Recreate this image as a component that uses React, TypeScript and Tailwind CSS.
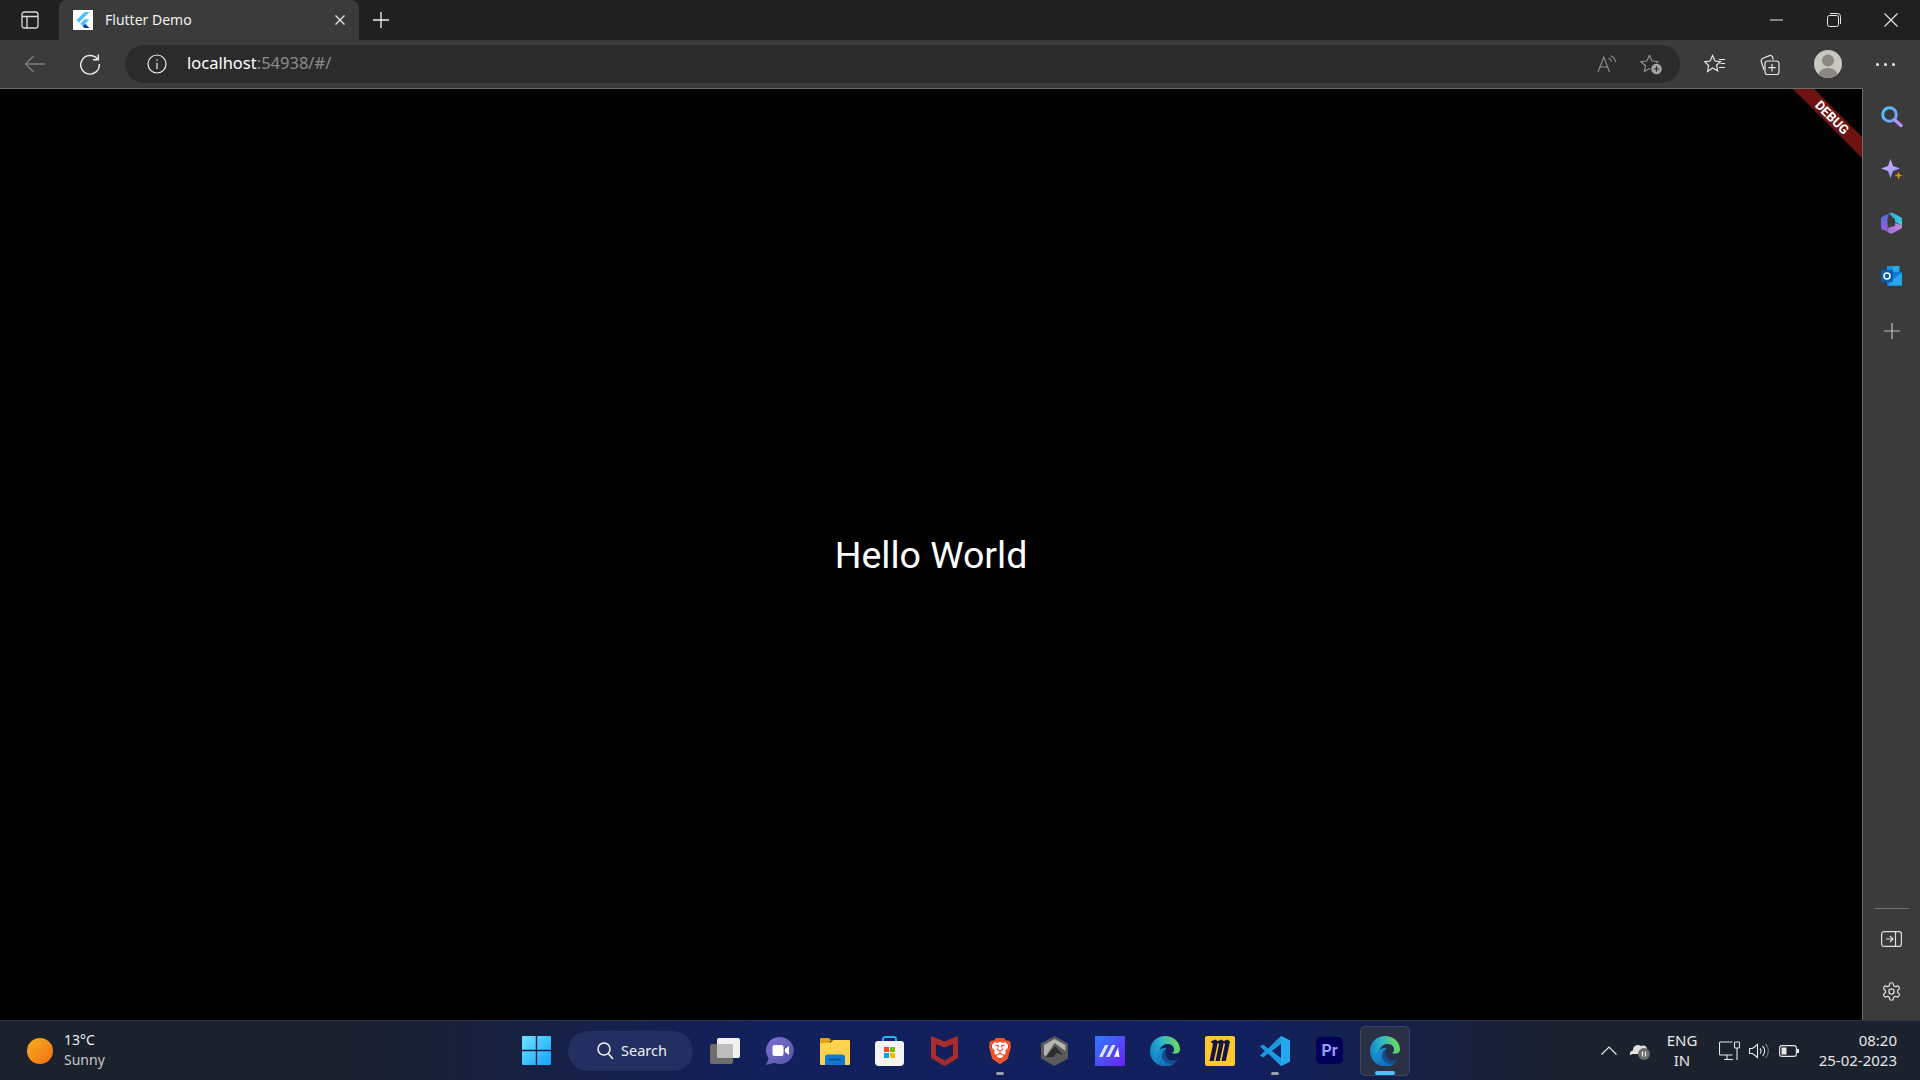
import React from 'react'
import { SiBrave } from 'react-icons/si'

function EdgeIcon({ id }: { id: string }) {
  return (
    <svg width="30" height="30" viewBox="0 0 30 30">
      <defs>
        <linearGradient id={`${id}-top`} x1="0" y1="0.7" x2="1" y2="0.4">
          <stop offset="0" stopColor="#0c7fc7" />
          <stop offset="0.5" stopColor="#2fb5c9" />
          <stop offset="1" stopColor="#6fdc5a" />
        </linearGradient>
        <linearGradient id={`${id}-low`} x1="0" y1="0" x2="1" y2="1">
          <stop offset="0" stopColor="#1a9be0" />
          <stop offset="1" stopColor="#0f5fa8" />
        </linearGradient>
      </defs>
      <path d="M15 0C6.500 0 0 6.500 0 15c0 8.500 6.500 15 15 15 3.600 0 6.600-.9 9-2.600-4.500 1.200-9.200-.4-11-3.600-2.400-4.200-.6-9.600 3.400-11.400-2-.6-5.500.2-7.500 2.600C11 9.500 15 7.800 18 8c4 .2 6.500 3 6 6.500-.2 1.200-1 2-2 2.500 3 1.500 8 .5 8-3.500C30 6 23.500 0 15 0z" fill={`url(#${id}-top)`} />
      <path d="M8 15.500C5 18 3.800 22 5 26c2.600 2.500 6 4 10 4 3.600 0 6.600-.9 9-2.600-4.500 1.200-9.200-.4-11-3.600-2.400-4.200-.6-9.600 3.400-11.400-2.900-.8-6.100.2-8.400 3.200z" fill={`url(#${id}-low)`} />
      <path d="M16.500 12.800c-3.500 1.200-5.300 6-3.500 10.400 1.500 3.500 6.500 5.500 11 4.200 1.700-1 3-2.300 4-3.900-3 1.500-7.500 1.500-10-.5-2.500-2.200-3.500-6.500-1.500-10.200z" fill="#0f4f94" />
    </svg>
  )
}

function TaskSlot({ children, dot }: { children: React.ReactNode; dot?: boolean }) {
  return (
    <div className="relative flex h-[60px] w-[55px] shrink-0 items-center justify-center">
      {children}
      {dot && <span className="absolute bottom-[6px] left-1/2 h-[3px] w-[8px] -translate-x-1/2 rounded-full bg-[#9a9fae]" />}
    </div>
  )
}

function SideSlot({ children }: { children: React.ReactNode }) {
  return <div className="flex h-[53px] items-center justify-center">{children}</div>
}

export default function App() {
  return (
    <div className="flex h-screen w-[1920px] flex-col overflow-hidden bg-black font-['Noto_Sans',sans-serif] text-white">
      {/* Title bar */}
      <div className="flex h-10 shrink-0 bg-[#202020]">
        <div className="flex w-[59px] items-center justify-center">
          <svg width="18" height="18" viewBox="0 0 18 18" fill="none" stroke="#d8d8d8" strokeWidth="1.300">
            <rect x="1" y="1" width="16" height="16" rx="2.500" />
            <path d="M1 5.500h16M6 5.500V17" />
          </svg>
        </div>
        <div className="flex h-10 w-[300px] items-center rounded-t-lg bg-[#3b3b3b] pl-[14px]">
          <div className="flex h-5 w-5 items-center justify-center bg-white">
            <svg width="16" height="16" viewBox="0 0 24 24">
              <path d="M14.300 0 2.300 12 6 15.700 21.700 0z" fill="#47c5fb" />
              <path d="M14.300 11 7.900 17.500l3.700 3.700L21.700 11z" fill="#47c5fb" />
              <path d="M11.600 21.200 14.300 24h7.400l-6.500-6.500-3.600 3.700z" fill="#0a3f8f" />
            </svg>
          </div>
          <span className="ml-3 text-[14px] leading-none text-[#f2f2f2]">Flutter Demo</span>
          <svg className="ml-auto mr-[13px]" width="12" height="12" viewBox="0 0 12 12" stroke="#e8e8e8" strokeWidth="1.300">
            <path d="M1.500 1.500l9 9M10.500 1.500l-9 9" />
          </svg>
        </div>
        <div className="flex w-[44px] items-center justify-center">
          <svg width="18" height="18" viewBox="0 0 18 18" stroke="#f0f0f0" strokeWidth="1.300">
            <path d="M9 1v16M1 9h16" />
          </svg>
        </div>
        <div className="ml-auto flex">
          <div className="flex w-[57px] items-center justify-center">
            <svg width="13" height="2" viewBox="0 0 13 2" stroke="#e8e8e8"><path d="M0 1h13" /></svg>
          </div>
          <div className="flex w-[57px] items-center justify-center">
            <svg width="14" height="14" viewBox="0 0 14 14" fill="none" stroke="#e8e8e8">
              <rect x="0.500" y="2.500" width="11" height="11" rx="2" />
              <path d="M3 .5h7.500a3 3 0 0 1 3 3V11" />
            </svg>
          </div>
          <div className="flex w-[58px] items-center justify-center">
            <svg width="14" height="14" viewBox="0 0 14 14" stroke="#e8e8e8" strokeWidth="1.100">
              <path d="M.5.5l13 13M13.500.5l-13 13" />
            </svg>
          </div>
        </div>
      </div>

      {/* Toolbar */}
      <div className="flex h-12 shrink-0 items-center bg-[#3b3b3b] pl-[7px]">
        <div className="flex w-[55px] justify-center">
          <svg width="22" height="20" viewBox="0 0 22 20" fill="none" stroke="#7d7d7d" strokeWidth="1.300">
            <path d="M21 10H1.500M9.500 2 1.500 10l8 8" />
          </svg>
        </div>
        <div className="flex w-[55px] justify-center">
          <svg width="22" height="22" viewBox="0 0 22 22" fill="none" stroke="#eeeeee" strokeWidth="1.400">
            <path d="M18.300 6A9.300 9.300 0 1 0 20.300 11" />
            <path d="M19.300 1.500V6.700H14" />
          </svg>
        </div>
        <div className="ml-2 flex h-[38px] w-[1555px] items-center rounded-full bg-[#2b2b2b] pr-[17px]">
          <svg className="ml-[22px]" width="20" height="20" viewBox="0 0 20 20" fill="none" stroke="#eeeeee" strokeWidth="1.200">
            <circle cx="10" cy="10" r="9" />
            <path d="M10 8.800V15M10 5.200v1.600" />
          </svg>
          <span className="mb-px ml-5 text-[16.500px] leading-none text-white">
            localhost<span className="text-[#8b8b8b]">:54938/#/</span>
          </span>
          <div className="ml-auto flex items-center gap-[23px]">
            <svg width="20" height="18" viewBox="0 0 20 18" fill="none" stroke="#8f8f8f" strokeWidth="1.100">
              <path d="M1 17 6.800 2 12.500 17M3 12h7.500" />
              <path d="M11.500 3a5 5 0 0 1 3 3.500M13.500 .7a7.500 7.500 0 0 1 5 6.500" />
            </svg>
            <svg width="23" height="21" viewBox="0 0 23 21" fill="none">
              <path d="M9.500 1.300 12 7l6 .7-4.500 4.100 1.200 5.800-5.200-3-5.200 3 1.200-5.800L.8 7.700 6.800 7z" stroke="#8f8f8f" strokeWidth="1.200" strokeLinejoin="round" />
              <circle cx="16.500" cy="15" r="5.800" fill="#a3a3a3" stroke="#2b2b2b" strokeWidth="1" />
              <path d="M16.500 12.300v5.400M13.800 15h5.400" stroke="#2b2b2b" strokeWidth="1.200" />
            </svg>
          </div>
        </div>
        <div className="ml-[14px] flex w-[42px] justify-center">
          <svg width="22" height="20" viewBox="0 0 22 20" fill="none" stroke="#e8e8e8" strokeWidth="1.200">
            <path d="M8.500 1.500 11 7l5.500.6-4 3.700 1.200 5.500-5.200-2.900-4.900 3.600 1-6-4-3.700 5.500-.8z" />
            <path d="M15 5.500h6M16.500 9.500H21M15 13.500h6" />
          </svg>
        </div>
        <div className="ml-3 flex w-[42px] justify-center">
          <svg width="21" height="21" viewBox="0 0 21 21" fill="none" stroke="#e8e8e8" strokeWidth="1.200">
            <path d="M5 16 2.300 7.500a2.500 2.500 0 0 1 1.700-3.200L10.500 1.600a2.500 2.500 0 0 1 3 1.400l.8 2.500" />
            <rect x="6" y="7" width="14" height="13.500" rx="2.500" />
            <path d="M13 10v7.500M9.300 13.700h7.500" />
          </svg>
        </div>
        <div className="ml-6 flex h-7 w-7 items-end justify-center overflow-hidden rounded-full bg-[#c9c7c2]">
          <svg width="28" height="28" viewBox="0 0 28 28">
            <circle cx="14" cy="10.500" r="6" fill="#8a8782" />
            <ellipse cx="14" cy="25" rx="9.500" ry="7" fill="#8a8782" />
          </svg>
        </div>
        <div className="ml-[34px] flex gap-[5px]">
          <span className="h-[3px] w-[3px] rounded-full bg-[#eeeeee]" />
          <span className="h-[3px] w-[3px] rounded-full bg-[#eeeeee]" />
          <span className="h-[3px] w-[3px] rounded-full bg-[#eeeeee]" />
        </div>
      </div>

      {/* Page + sidebar */}
      <div className="flex min-h-0 flex-1">
        <main className="relative flex flex-1 items-center justify-center border-t border-[#6b6b6b] bg-black">
          <h1 className="pt-[2px] font-['Roboto',sans-serif] text-[37.500px] font-normal leading-none text-white">Hello World</h1>
          <div className="absolute right-0 top-0 h-[70px] w-[70px] overflow-hidden">
            <div className="absolute left-[-20px] top-[21px] flex h-[15px] w-[120px] rotate-45 items-center justify-center bg-[#6f1212]">
              <span className="font-['Roboto',sans-serif] text-[13px] font-bold leading-none text-white">DEBUG</span>
            </div>
          </div>
        </main>
        <aside className="flex w-[58px] shrink-0 flex-col border-l border-[#6b6b6b] bg-[#3b3b3b] pt-[2px] pb-[2px]">
          <SideSlot>
            <svg width="22" height="22" viewBox="0 0 22 22" fill="none">
              <defs>
                <linearGradient id="s1" x1="0" y1="0" x2="1" y2="1">
                  <stop offset="0" stopColor="#4fc3f7" />
                  <stop offset="1" stopColor="#7a9cff" />
                </linearGradient>
              </defs>
              <circle cx="8.500" cy="8.500" r="6.800" stroke="url(#s1)" strokeWidth="3" />
              <path d="M14.500 14.500 20 19.500" stroke="#b490f0" strokeWidth="3.500" strokeLinecap="round" />
            </svg>
          </SideSlot>
          <SideSlot>
            <svg width="22" height="22" viewBox="0 0 22 22">
              <defs>
                <linearGradient id="s2" x1="0" y1="0" x2="1" y2="1">
                  <stop offset="0" stopColor="#d8a8ff" />
                  <stop offset="1" stopColor="#8f9cff" />
                </linearGradient>
              </defs>
              <path d="M9.500 0 12 7l7 2.500-7 2.500-2.500 7L7 12 0 9.500 7 7z" fill="url(#s2)" />
              <path d="M17.500 12.500l1 3 3 1-3 1-1 3.500-1-3.500-3-1 3-1z" fill="#d9920c" />
            </svg>
          </SideSlot>
          <SideSlot>
            <svg width="21" height="22" viewBox="0 0 21 22">
              <defs>
                <linearGradient id="s3" x1="0" y1="0" x2="0" y2="1">
                  <stop offset="0" stopColor="#4a6ee0" />
                  <stop offset="1" stopColor="#a05cd8" />
                </linearGradient>
                <linearGradient id="s4" x1="0" y1="0" x2="1" y2="1">
                  <stop offset="0" stopColor="#2aa8e0" />
                  <stop offset="1" stopColor="#3fd0d8" />
                </linearGradient>
                <linearGradient id="s5" x1="0" y1="0" x2="1" y2="0">
                  <stop offset="0" stopColor="#9a6be0" />
                  <stop offset="1" stopColor="#c88ae0" />
                </linearGradient>
              </defs>
              <path d="M8 1.500 1.500 4.500C.5 5 0 6 0 7v8c0 1 .5 2 1.500 2.500L7 20l-.5-3.500V7.500z" fill="url(#s3)" />
              <path d="M8 1.500C9 .5 11 .5 12 1l7.500 4c1 .5 1.500 1.500 1.500 2.500v6l-7-3.800V7.500z" fill="url(#s4)" />
              <path d="M6.500 12.500 14 10.700 21 13.500v1c0 1-.5 2-1.500 2.500L12 21c-2 1-4 .5-5-1z" fill="url(#s5)" />
              <path d="M7 7.500 14 10.500v3.300l-7 2z" fill="#3b3b3b" />
            </svg>
          </SideSlot>
          <SideSlot>
            <svg width="21" height="20" viewBox="0 0 21 20">
              <rect x="6" y="0" width="12" height="9" fill="#1490df" />
              <rect x="12" y="0" width="6.500" height="9" fill="#28a8ea" />
              <path d="M6 6h15v12.500a1.200 1.200 0 0 1-1.200 1.200H7.200A1.200 1.200 0 0 1 6 18.500z" fill="#0f78d4" />
              <path d="M12 13l9-6v12.500H7z" fill="#28a8ea" />
              <rect x="0" y="4" width="12" height="12" rx="1" fill="#0a5eb0" />
              <circle cx="6" cy="10" r="3" fill="none" stroke="#ffffff" strokeWidth="1.500" />
            </svg>
          </SideSlot>
          <div className="mt-[2px]">
            <SideSlot>
              <svg width="16" height="16" viewBox="0 0 16 16" stroke="#bdbdbd" strokeWidth="1.200">
                <path d="M8 0v16M0 8h16" />
              </svg>
            </SideSlot>
          </div>
          <div className="mx-auto mb-[3px] mt-auto h-px w-[35px] bg-[#6f6f6f]" />
          <SideSlot>
            <svg width="21" height="16" viewBox="0 0 21 16" fill="none" stroke="#e0e0e0" strokeWidth="1.200">
              <rect x="0.600" y="0.600" width="19.800" height="14.800" rx="2.500" />
              <path d="M14.500.6v14.800M5 8h6.500M9 5l3 3-3 3" />
            </svg>
          </SideSlot>
          <SideSlot>
            <svg width="21" height="21" viewBox="0 0 24 24" fill="none" stroke="#e0e0e0" strokeWidth="1.400" strokeLinejoin="round">
              <path d="M12.220 2h-.44a2 2 0 0 0-2 2v.18a2 2 0 0 1-1 1.730l-.43.250a2 2 0 0 1-2 0l-.15-.08a2 2 0 0 0-2.730.730l-.22.380a2 2 0 0 0 .730 2.730l.15.100a2 2 0 0 1 1 1.720v.510a2 2 0 0 1-1 1.740l-.15.090a2 2 0 0 0-.730 2.730l.22.380a2 2 0 0 0 2.730.730l.15-.08a2 2 0 0 1 2 0l.43.250a2 2 0 0 1 1 1.730V20a2 2 0 0 0 2 2h.44a2 2 0 0 0 2-2v-.18a2 2 0 0 1 1-1.730l.43-.250a2 2 0 0 1 2 0l.15.080a2 2 0 0 0 2.730-.730l.22-.390a2 2 0 0 0-.730-2.730l-.15-.080a2 2 0 0 1-1-1.740v-.500a2 2 0 0 1 1-1.740l.15-.090a2 2 0 0 0 .730-2.730l-.22-.380a2 2 0 0 0-2.730-.730l-.15.080a2 2 0 0 1-2 0l-.43-.250a2 2 0 0 1-1-1.730V4a2 2 0 0 0-2-2z" />
              <circle cx="12" cy="12" r="3" />
            </svg>
          </SideSlot>
        </aside>
      </div>

      {/* Taskbar */}
      <div className="flex h-[60px] shrink-0 items-center border-t border-[#30344a] bg-[linear-gradient(90deg,#1b212d_0%,#1b212d_17%,#12205c_40%,#11205e_65%,#1b212d_82%,#1b212d_100%)]">
        <div className="flex w-[522px] shrink-0 items-center pl-[27px]">
          <div className="h-[26px] w-[26px] rounded-full bg-gradient-to-br from-[#f5b223] to-[#f06a0f]" />
          <div className="mb-[2px] ml-[11px] flex flex-col text-[14px] leading-[20px]">
            <span className="text-[#f0f0f0]">13°C</span>
            <span className="text-[#c8c8c8]">Sunny</span>
          </div>
        </div>
        <svg width="29" height="29" viewBox="0 0 29 29" className="shrink-0">
          <defs>
            <linearGradient id="w1" x1="0" y1="0" x2="1" y2="1">
              <stop offset="0" stopColor="#6fe3ff" />
              <stop offset="1" stopColor="#16a0ff" />
            </linearGradient>
          </defs>
          <path d="M1 0h12.800v13.800H0V1a1 1 0 0 1 1-1zM15.200 0H28a1 1 0 0 1 1 1v12.800H15.200zM0 15.200h13.800V29H1a1 1 0 0 1-1-1zM15.200 15.200H29V28a1 1 0 0 1-1 1H15.200z" fill="url(#w1)" />
        </svg>
        <div className="ml-[17px] flex h-10 w-[125px] shrink-0 items-center rounded-full bg-[#222f60] pl-[29px]">
          <svg width="17" height="18" viewBox="0 0 17 18" fill="none" stroke="#f5f5f5" strokeWidth="1.500">
            <circle cx="7" cy="7" r="6" />
            <path d="M11.200 11.500 16 17" />
          </svg>
          <span className="ml-[7px] text-[14.500px] leading-none text-[#f0f0f0]">Search</span>
        </div>
        <div className="ml-1 flex shrink-0">
          <TaskSlot>
            <svg width="30" height="30" viewBox="0 0 30 30">
              <rect x="0" y="8" width="23" height="20" rx="2" fill="#6d6d6d" />
              <rect x="7" y="2" width="23" height="20" rx="2" fill="#f2f2f2" />
              <rect x="7" y="8" width="16" height="14" fill="#bdbdbd" />
            </svg>
          </TaskSlot>
          <TaskSlot>
            <svg width="30" height="30" viewBox="0 0 30 30">
              <defs>
                <linearGradient id="c1" x1="0" y1="0" x2="1" y2="1">
                  <stop offset="0" stopColor="#7d6fd0" />
                  <stop offset="1" stopColor="#5158a8" />
                </linearGradient>
              </defs>
              <path d="M15.500 1a13.500 13.500 0 1 1-6 25.700L1 29l2.700-6.500A13.500 13.500 0 0 1 15.500 1z" fill="url(#c1)" />
              <rect x="7.500" y="9" width="11" height="11" rx="2" fill="#ffffff" />
              <path d="M20 13l4-3v9l-4-3z" fill="#ffffff" />
            </svg>
          </TaskSlot>
          <TaskSlot>
            <svg width="30" height="28" viewBox="0 0 30 28">
              <path d="M0 2a1 1 0 0 1 1-1h8l3 3h-2v3H0z" fill="#dda40f" />
              <path d="M0 6h10l3-3h16a1 1 0 0 1 1 1v23a1 1 0 0 1-1 1H1a1 1 0 0 1-1-1z" fill="#ffd24d" />
              <path d="M5 28v-8a2.500 2.500 0 0 1 2.500-2.500h15A2.500 2.500 0 0 1 25 20v8z" fill="#0f78d4" />
              <path d="M9 22.500h12" stroke="#0a4a94" strokeWidth="1.500" />
            </svg>
          </TaskSlot>
          <TaskSlot>
            <svg width="29" height="30" viewBox="0 0 29 30">
              <path d="M8 5V3a2 2 0 0 1 2-2h9a2 2 0 0 1 2 2v2" fill="none" stroke="#27b5ee" strokeWidth="1.800" />
              <path d="M0 8a3 3 0 0 1 3-3h23a3 3 0 0 1 3 3v18a4 4 0 0 1-4 4H4a4 4 0 0 1-4-4z" fill="#f5f5f5" />
              <rect x="9" y="11" width="5" height="5" fill="#f25022" />
              <rect x="15" y="11" width="5" height="5" fill="#7fba00" />
              <rect x="9" y="17" width="5" height="5" fill="#00a4ef" />
              <rect x="15" y="17" width="5" height="5" fill="#ffb900" />
            </svg>
          </TaskSlot>
          <TaskSlot>
            <svg width="27" height="30" viewBox="0 0 27 30">
              <path d="M0 0l13.500 5.500L27 0v22l-13.500 8L0 22zM5 8v11.500l8.500 5 8.500-5V8l-8.500 3.500z" fill="#a92c2c" fillRule="evenodd" />
            </svg>
          </TaskSlot>
          <TaskSlot dot>
            <div className="relative flex h-[30px] w-[26px] items-center justify-center">
              <div className="absolute left-[5px] top-[6px] h-[16px] w-[16px] bg-white" />
              <SiBrave className="relative" size={30} color="#f2522a" />
            </div>
          </TaskSlot>
          <TaskSlot>
            <svg width="27" height="30" viewBox="0 0 27 30">
              <path d="M13.500 0 27 7.500v15L13.500 30 0 22.500v-15z" fill="#5a5a5a" />
              <path d="M13.500 3 24.500 9v6L13.500 7 5 20 3 19V9z" fill="#b5b5b5" />
              <path d="M5 21 14 10l8 9-6-2-4 4z" fill="#2c2c2c" />
            </svg>
          </TaskSlot>
          <TaskSlot>
            <svg width="30" height="30" viewBox="0 0 30 30">
              <defs>
                <linearGradient id="m1" x1="0" y1="0" x2="1" y2="1">
                  <stop offset="0" stopColor="#2f7cff" />
                  <stop offset="1" stopColor="#6a20f0" />
                </linearGradient>
              </defs>
              <rect width="30" height="30" fill="url(#m1)" />
              <path d="M4 21 10 9h3.500L7.500 21zM11 21 17 9h3.500l-6 12z" fill="#dfe4ff" />
              <path d="M19 21l4-10 1.500 10h-2.300l-.2-1.500-.8 1.500z" fill="#ffffff" />
            </svg>
          </TaskSlot>
          <TaskSlot>
            <EdgeIcon id="edge-a" />
          </TaskSlot>
          <TaskSlot>
            <svg width="30" height="30" viewBox="0 0 30 30">
              <rect width="30" height="30" rx="2" fill="#fdc92f" />
              <path d="M4.500 25 8 8 5.500 5.500 10.500 3.500 13 5.500 8.800 25zM10.500 25 14 8 11.500 5.500 16.500 3.500 19 5.500 14.800 25zM16.500 25 20 8 17.500 5.500 22.500 3.500 25 5.500 20.800 25z" fill="#17153f" />
            </svg>
          </TaskSlot>
          <TaskSlot dot>
            <svg width="30" height="30" viewBox="0 0 30 30">
              <path d="M21 0 30 4.500v21L21 30 8 17.500 3 21.500 0 19.500 5 15 0 10.500 3 8.500l5 4z" fill="#1e9be0" />
              <path d="M21 8 12 15l9 7z" fill="#11205e" />
              <path d="M21 0 30 4.500v21L21 30z" fill="#24a8f0" />
            </svg>
          </TaskSlot>
          <TaskSlot>
            <div className="flex h-[27px] w-[27px] items-center justify-center rounded-[5px] bg-[#00005b]">
              <span className="font-['Roboto',sans-serif] text-[16px] font-bold leading-none text-[#9999ff]">Pr</span>
            </div>
          </TaskSlot>
          <TaskSlot>
            <div className="relative flex h-[50px] w-[50px] items-center justify-center rounded-[5px] border border-[#3b4462] bg-[#2a3046]">
              <EdgeIcon id="edge-b" />
              <span className="absolute bottom-0 left-1/2 h-[4px] w-[20px] -translate-x-1/2 rounded-full bg-[#4cc2ff]" />
            </div>
          </TaskSlot>
        </div>

        {/* Tray */}
        <div className="ml-auto flex items-center pr-[23px] text-[14px] text-[#e8e8e8]">
          <div className="flex w-[30px] justify-center">
            <svg width="16" height="9" viewBox="0 0 16 9" fill="none" stroke="#e8e8e8" strokeWidth="1.200"><path d="M.5 8.500 8 1l7.500 7.500" /></svg>
          </div>
          <div className="flex w-[30px] justify-center">
            <svg width="21" height="18" viewBox="0 0 21 18">
              <path d="M1 13a3.500 3.500 0 0 1 3-4.500A5 5 0 0 1 12 4a4 4 0 0 1 6 3v5H3a2 2 0 0 1-2 1z" fill="#e0e0e0" />
              <circle cx="15" cy="12" r="6" fill="#6b6b6b" />
              <path d="M13.500 9.500v5M16.500 9.500v5" stroke="#f0f0f0" strokeWidth="1.200" />
            </svg>
          </div>
          <div className="mb-[2px] flex w-[56px] flex-col items-center text-[15px] leading-[20px]">
            <span>ENG</span>
            <span>IN</span>
          </div>
          <div className="ml-1 flex w-[30px] justify-center">
            <svg width="21" height="20" viewBox="0 0 21 20" fill="none" stroke="#e8e8e8" strokeWidth="1.100">
              <path d="M13.500 14H1.500a1 1 0 0 1-1-1V2a1 1 0 0 1 1-1h12" />
              <path d="M5 18.500h9M8 14v4.500" />
              <rect x="15.500" y="1" width="5" height="6" rx="1" />
              <path d="M18 7v12" />
            </svg>
          </div>
          <div className="flex w-[30px] justify-center">
            <svg width="20" height="16" viewBox="0 0 20 16" fill="none" stroke="#e8e8e8" strokeWidth="1.100">
              <path d="M.5 5.500h3L8.500 1.500v13l-5-4h-3z" />
              <path d="M11 5.500a3.500 3.500 0 0 1 0 5M13.500 3a7 7 0 0 1 0 10" />
              <path d="M16.500 1a10 10 0 0 1 0 14" stroke="#777777" />
            </svg>
          </div>
          <div className="flex w-[30px] justify-center">
            <svg width="20" height="12" viewBox="0 0 20 12" fill="none" stroke="#e8e8e8" strokeWidth="1.100">
              <rect x="0.600" y="0.600" width="16.800" height="10.800" rx="2.500" />
              <rect x="2.500" y="2.500" width="5" height="7" fill="#e8e8e8" stroke="none" />
              <path d="M19 4v4" strokeWidth="2" />
            </svg>
          </div>
          <div className="mb-[2px] flex w-[93px] flex-col items-end text-[15px] leading-[20px]">
            <span>08:20</span>
            <span>25-02-2023</span>
          </div>
        </div>
      </div>
    </div>
  )
}
